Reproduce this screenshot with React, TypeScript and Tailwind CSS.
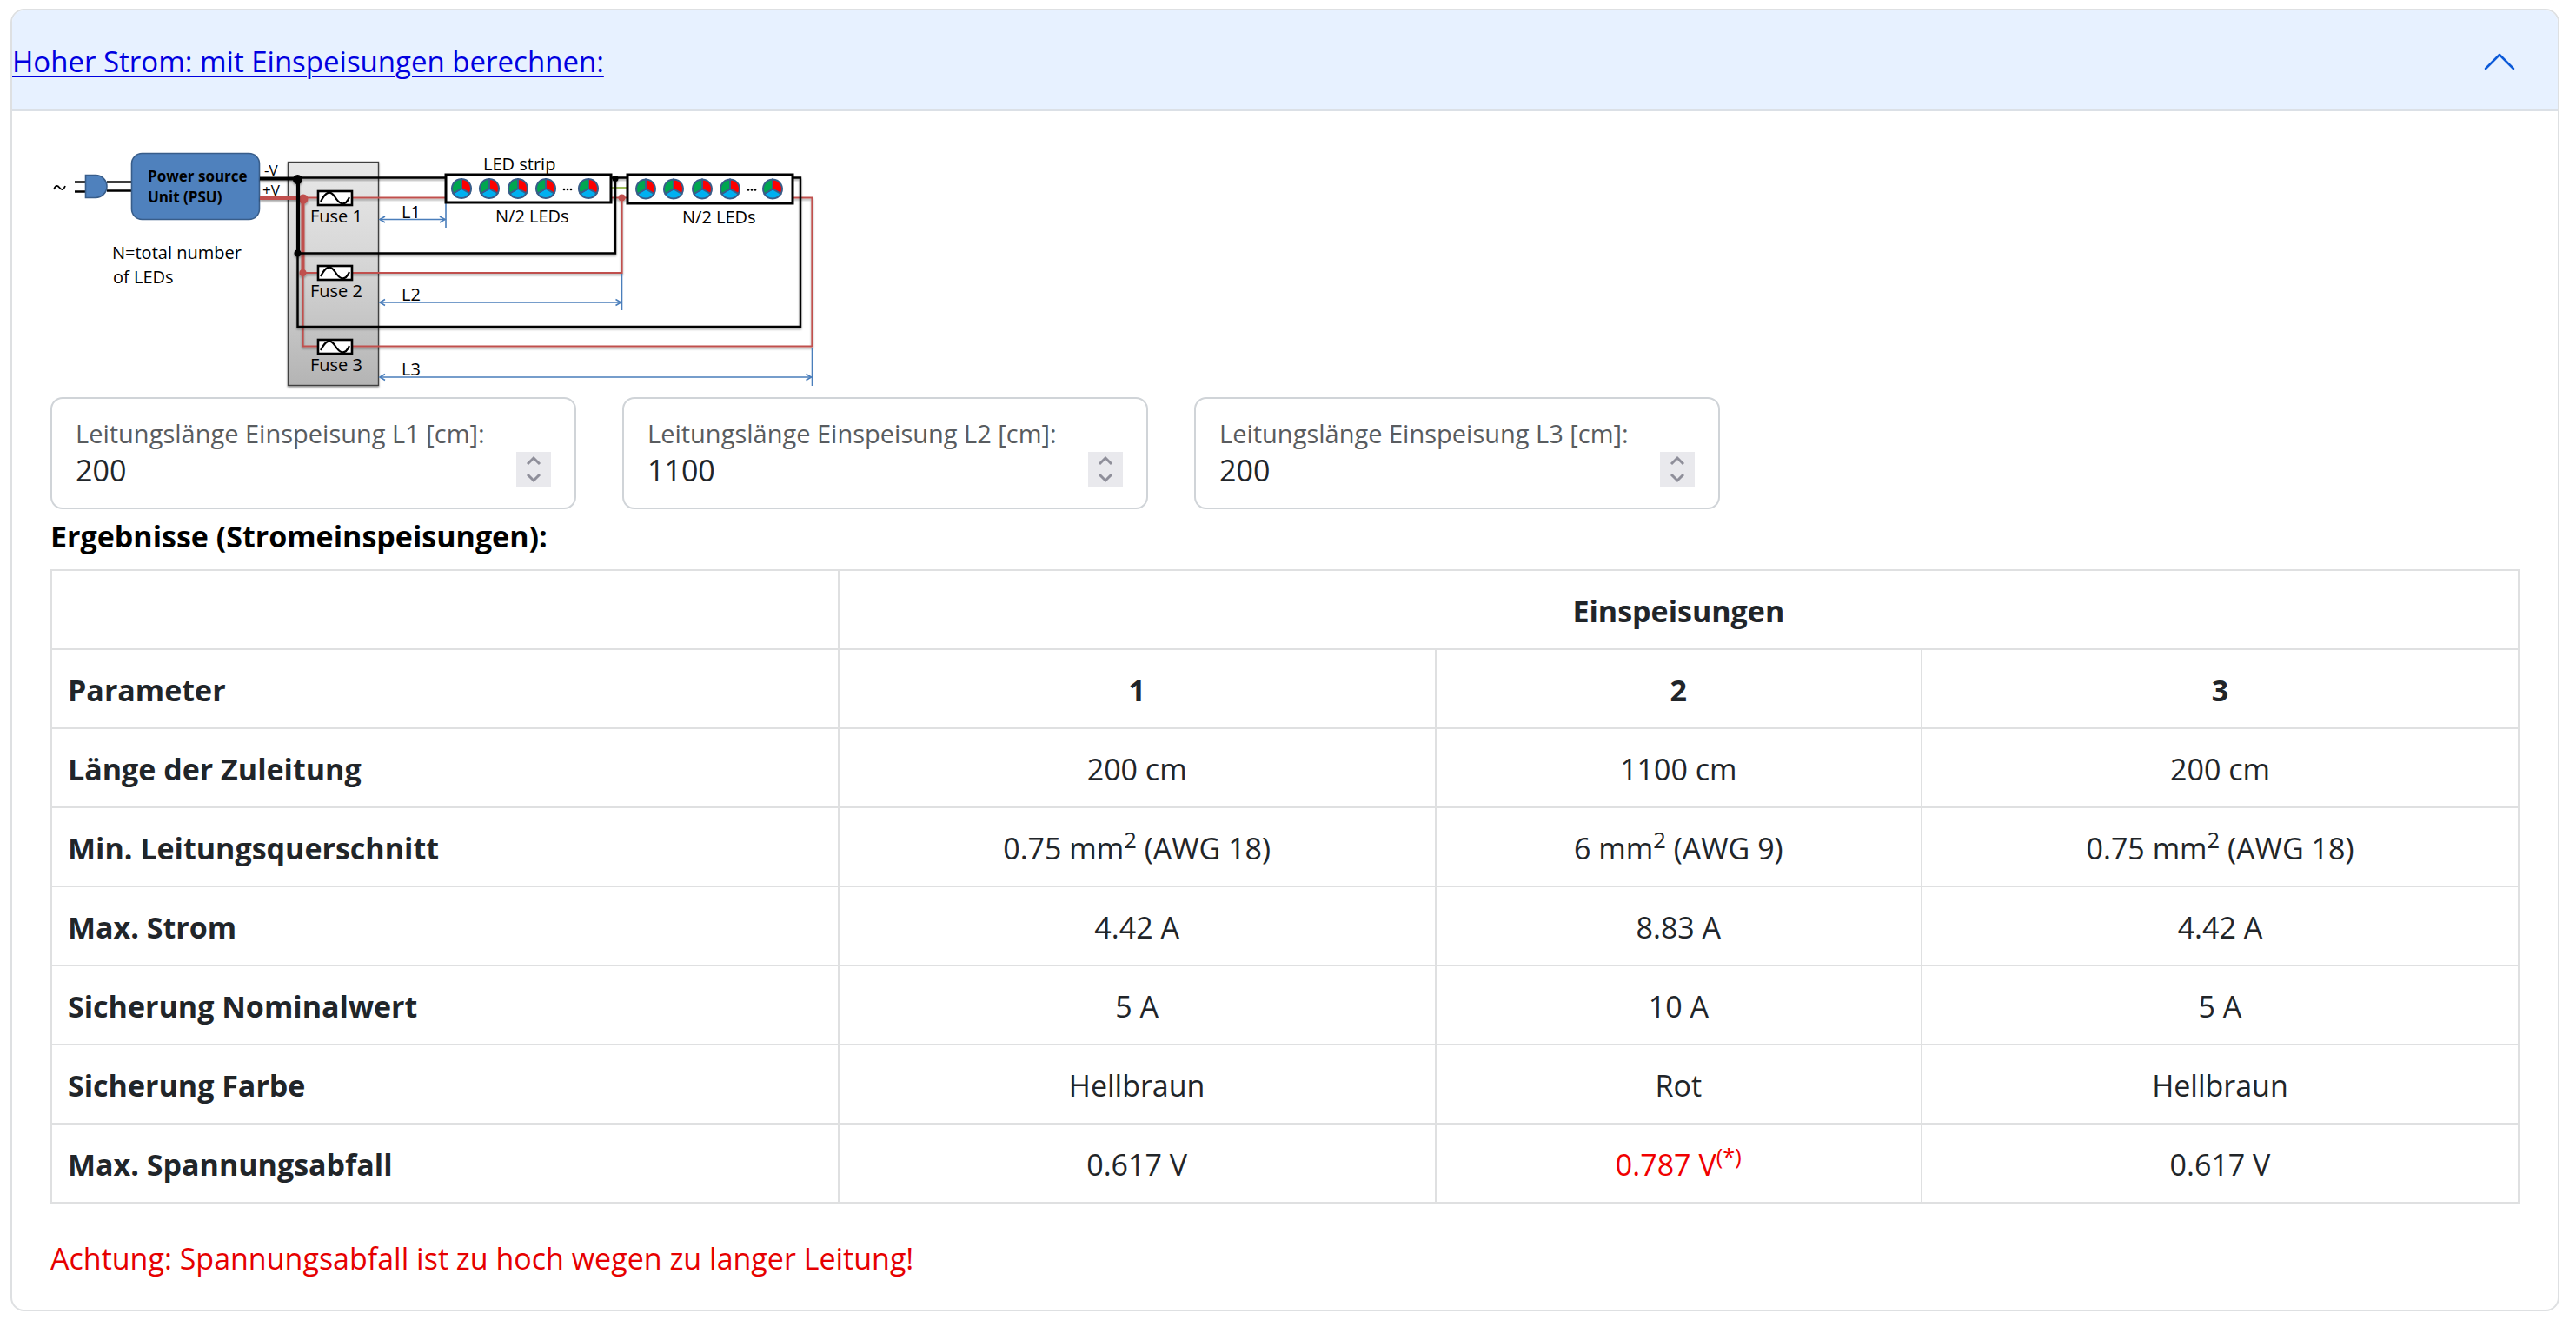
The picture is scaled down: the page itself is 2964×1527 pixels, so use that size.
import { useState } from "react";

const DIAGRAM_FONT = '"Open Sans", "Noto Sans", sans-serif';

function Led({ x, y }: { x: number; y: number }) {
  return (
    <g transform={`translate(${x} ${y})`} stroke="#385d8a" strokeWidth="2">
      <path d="M0 0V-11A11 11 0 0 1 9.5 5.5Z" fill="#fe0000" />
      <path d="M0 0L9.5 5.5A11 11 0 0 1 -9.5 5.5Z" fill="#00b0f0" />
      <path d="M0 0L-9.5 5.5A11 11 0 0 1 0 -11Z" fill="#00a650" />
    </g>
  );
}

function Strip({ x, height, inset }: { x: number; height: number; inset: number }) {
  const y = 201 + height / 2;
  return (
    <g>
      <rect x={x} y="201" width="190" height={height} fill="#fff" stroke="#000" strokeWidth="3" />
      {[0, 32, 65, 97, 146].map((dx) => (
        <Led key={dx} x={x + inset + dx} y={y} />
      ))}
      {[118, 122, 126].map((dx) => (
        <circle key={dx} cx={x + inset + dx} cy={y + 1} r="1.3" />
      ))}
    </g>
  );
}

function Fuse({ y, label }: { y: number; label: string }) {
  return (
    <g>
      <rect x="366" y={y} width="39" height="16" fill="#fff" stroke="#000" strokeWidth="2.6" />
      <path
        transform={`translate(366 ${y})`}
        d="M3 12C9 0 14 -1 19 6C25 16 31 18 36 7"
        fill="none"
        stroke="#000"
        strokeWidth="2.2"
      />
      <text x="357" y={y + 36} fontSize="20">
        {label}
      </text>
    </g>
  );
}

function Dimension({ y, to, from, end, label }: { y: number; to: number; from: number; end: number; label: string }) {
  return (
    <g>
      <g fill="none" stroke="#4a7ebb" strokeWidth="1.6">
        <path d={`M437 ${y}H${to - 1}M${to} ${from}V${end}`} />
        <path d={`M443 ${y - 3.5}L437 ${y}L443 ${y + 3.5}M${to - 7} ${y - 3.5}L${to - 1} ${y}L${to - 7} ${y + 3.5}`} />
      </g>
      <text x="462" y={y - 2} fontSize="20">
        {label}
      </text>
    </g>
  );
}

function WiringDiagram() {
  return (
    <svg
      viewBox="58 160 890 297"
      className="block h-[297px] w-[890px] max-w-full"
      role="img"
      aria-label="Power source, fuses and LED strips"
      fontFamily={DIAGRAM_FONT}
      fill="#000"
    >
      <defs>
        <linearGradient id="panel" x1="0" y1="0" x2="0" y2="1">
          <stop offset="0" stopColor="#e8e8e8" />
          <stop offset="0.45" stopColor="#d6d6d6" />
          <stop offset="1" stopColor="#b4b4b4" />
        </linearGradient>
        <filter id="shade" filterUnits="userSpaceOnUse" x="58" y="160" width="890" height="297">
          <feDropShadow dx="0" dy="2" stdDeviation="1.2" floodColor="#000" floodOpacity="0.35" />
        </filter>
      </defs>

      <rect x="331.5" y="186.5" width="104" height="257" fill="url(#panel)" stroke="#404040" strokeWidth="1.4" filter="url(#shade)" />

      <path d="M62 218C64 213 66 213 68.500 216S73 219 75 214" fill="none" stroke="#000" strokeWidth="1.8" />
      <path d="M86 209.500H98M86 220.500H98M123 209.500H151M123 219.500H151" stroke="#000" strokeWidth="2.4" />
      <path d="M98.500 201.500H110A13 13 0 0 1 110 227.500H98.500Z" fill="#4f81bd" stroke="#385d8a" strokeWidth="1.6" />
      <rect x="151.500" y="176.500" width="147" height="76" rx="12" fill="#4f81bd" stroke="#385d8a" strokeWidth="1.6" />
      <g fontWeight="700" fontSize="17">
        <text x="170" y="209">Power source</text>
        <text x="170" y="233">Unit (PSU)</text>
      </g>
      <g fontSize="17">
        <text x="304" y="202">-V</text>
        <text x="302" y="225">+V</text>
      </g>
      <g fontSize="20">
        <text x="129" y="298">N=total number</text>
        <text x="130" y="326">of LEDs</text>
      </g>

      <g fill="none" stroke="#c0504d" strokeWidth="2.2" filter="url(#shade)">
        <path d="M299 228H349" strokeWidth="4" />
        <path d="M348.500 228V314" strokeWidth="4" />
        <path d="M349 227.500H513M349 314H715.500V227.500M702 227.500H722M348.500 314V398.500H934.500V227.500H912" />
        <circle cx="349" cy="229" r="5.500" fill="#c0504d" stroke="none" />
        <circle cx="348.500" cy="314" r="4" fill="#c0504d" stroke="none" />
        <circle cx="715.500" cy="227.500" r="4" fill="#c0504d" stroke="none" />
      </g>
      <path d="M702 216H722" stroke="#9bbb59" strokeWidth="2" />
      <g fill="none" stroke="#000" strokeWidth="2.4" filter="url(#shade)">
        <path d="M299 205.500H343V291" strokeWidth="4" />
        <path d="M343 204.500H513M342.500 291.500H708V204.500M702 204.500H722M342.500 291V376H921V204.500H912" />
        <circle cx="342.500" cy="206.500" r="5.500" fill="#000" stroke="none" />
        <circle cx="342.500" cy="291.500" r="4" fill="#000" stroke="none" />
        <circle cx="708" cy="205.500" r="3.500" fill="#000" stroke="none" />
      </g>

      <Fuse y={220} label="Fuse 1" />
      <Fuse y={306} label="Fuse 2" />
      <Fuse y={391} label="Fuse 3" />
      <Dimension y={252.5} to={513} from={234} end={262} label="L1" />
      <Dimension y={348} to={715.5} from={315} end={357} label="L2" />
      <Dimension y={434} to={934.5} from={400} end={444} label="L3" />
      <Strip x={513} height={32} inset={18} />
      <Strip x={722} height={33} inset={21} />
      <g fontSize="20">
        <text x="556" y="196">LED strip</text>
        <text x="570" y="256">N/2 LEDs</text>
        <text x="785" y="257">N/2 LEDs</text>
      </g>
    </svg>
  );
}

function LengthField({ id, label, initial }: { id: string; label: string; initial: number }) {
  const [value, setValue] = useState(initial);
  return (
    <div className="flex w-[605px] items-end justify-between rounded-[14px] border-2 border-[#d0d4d8] px-[27px] pt-[19px] pb-6">
      <div className="flex min-w-0 flex-1 flex-col">
        <label htmlFor={id} className="text-[29px] leading-[42px] whitespace-nowrap text-[#595c5f]">
          {label}
        </label>
        <input
          id={id}
          type="number"
          value={value}
          onChange={(e) => setValue(Number(e.target.value))}
          className="h-10 w-full appearance-none bg-transparent pt-0.5 text-[34px] leading-10 text-[#212529] outline-none [-moz-appearance:textfield] [&::-webkit-inner-spin-button]:appearance-none"
        />
      </div>
      <div className="flex h-10 w-10 flex-col bg-[#e9e9ed] text-[#8f8f9a]">
        <button type="button" aria-label="Erhöhen" className="flex h-5 items-center justify-center" onClick={() => setValue(value + 1)}>
          <svg viewBox="0 0 20 12" className="h-3 w-5" fill="none" stroke="currentColor" strokeWidth="3">
            <path d="M3 10L10 3L17 10" />
          </svg>
        </button>
        <button type="button" aria-label="Verringern" className="flex h-5 items-center justify-center" onClick={() => setValue(value - 1)}>
          <svg viewBox="0 0 20 12" className="h-3 w-5" fill="none" stroke="currentColor" strokeWidth="3">
            <path d="M3 2L10 9L17 2" />
          </svg>
        </button>
      </div>
    </div>
  );
}

const area = (mm: string, awg: string) => (
  <>
    {mm} mm<sup>2</sup> (AWG {awg})
  </>
);

const rows = [
  { name: "Länge der Zuleitung", cells: ["200 cm", "1100 cm", "200 cm"] },
  { name: "Min. Leitungsquerschnitt", cells: [area("0.75", "18"), area("6", "9"), area("0.75", "18")] },
  { name: "Max. Strom", cells: ["4.42 A", "8.83 A", "4.42 A"] },
  { name: "Sicherung Nominalwert", cells: ["5 A", "10 A", "5 A"] },
  { name: "Sicherung Farbe", cells: ["Hellbraun", "Rot", "Hellbraun"] },
  {
    name: "Max. Spannungsabfall",
    cells: [
      "0.617 V",
      <span className="text-[#f00000]">
        0.787 V<sup>(*)</sup>
      </span>,
      "0.617 V",
    ],
  },
];

const cell = "border-2 border-[#dfe0e1] px-[18px] pt-[18px] pb-[15px]";

export default function App() {
  return (
    <main className="px-3 pt-[10px] pb-4 pr-[19px] font-['Open_Sans','Noto_Sans',sans-serif] text-[34px] leading-[54px] text-[#212529]">
      <section className="overflow-hidden rounded-[16px] border-2 border-[#dee0e2] bg-white">
        <header className="flex items-center justify-between border-b-2 border-[#dbe0e6] bg-[#e7f1ff] pt-8 pb-7 pr-[47px]">
          <a href="#einspeisungen" className="text-[33px] text-[#0000e0] underline decoration-2 underline-offset-4">
            Hoher Strom: mit Einspeisungen berechnen:
          </a>
          <button type="button" aria-label="Einklappen" aria-expanded="true">
            <svg viewBox="0 0 16 16" className="h-10 w-10" fill="none" stroke="#0c5ad8" strokeLinecap="round" strokeLinejoin="round">
              <path d="M1.600 11.200L8 4.800L14.400 11.200" />
            </svg>
          </button>
        </header>
        <div id="einspeisungen" className="px-11 pt-8 pb-[20px]">
          <WiringDiagram />
          <div className="flex flex-wrap gap-[53px]">
            <LengthField id="l1" label="Leitungslänge Einspeisung L1 [cm]:" initial={200} />
            <LengthField id="l2" label="Leitungslänge Einspeisung L2 [cm]:" initial={1100} />
            <LengthField id="l3" label="Leitungslänge Einspeisung L3 [cm]:" initial={200} />
          </div>
          <h2 className="pt-1 pb-[11px] font-bold text-black">Ergebnisse (Stromeinspeisungen):</h2>
          <table className="w-full table-fixed border-collapse text-center">
            <colgroup>
              <col className="w-[31.9%]" />
              <col className="w-[24.2%]" />
              <col className="w-[19.7%]" />
              <col className="w-[24.2%]" />
            </colgroup>
            <thead>
              <tr className="h-[91px]">
                <td className={cell}></td>
                <th colSpan={3} scope="colgroup" className={cell}>
                  Einspeisungen
                </th>
              </tr>
              <tr className="h-[91px]">
                <th scope="col" className={`${cell} text-left`}>
                  Parameter
                </th>
                <th scope="col" className={cell}>1</th>
                <th scope="col" className={cell}>2</th>
                <th scope="col" className={cell}>3</th>
              </tr>
            </thead>
            <tbody>
              {rows.map((row) => (
                <tr key={row.name} className="h-[91px]">
                  <th scope="row" className={`${cell} text-left`}>
                    {row.name}
                  </th>
                  {row.cells.map((content, i) => (
                    <td key={i} className={cell}>
                      {content}
                    </td>
                  ))}
                </tr>
              ))}
            </tbody>
          </table>
          <p className="pt-[36px] pb-3 text-[#e60000]">Achtung: Spannungsabfall ist zu hoch wegen zu langer Leitung!</p>
        </div>
      </section>
    </main>
  );
}
